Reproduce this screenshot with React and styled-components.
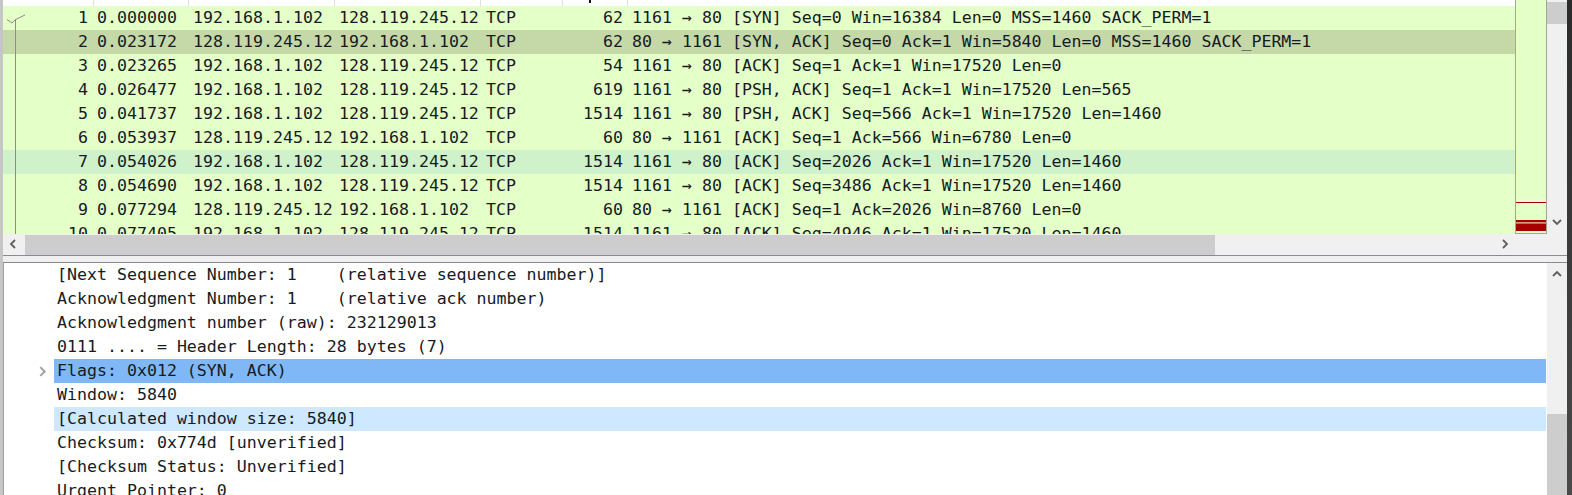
import React from 'react';
import styled, { createGlobalStyle } from 'styled-components';

const GlobalStyle = createGlobalStyle`
  html, body {
    margin: 0;
    padding: 0;
    background: #3a3a3a;
  }
  body {
    font-family: "DejaVu Sans Mono", "Liberation Mono", monospace;
    color: #161b1f;
  }
`;

const COLS = '91px 95px 146px 146px 82px 65px 1fr';

const Screen = styled.div`
  display: flex;
  width: 1572px;
  height: 495px;
  overflow: hidden;
`;

const LeftEdge = styled.div`
  width: 3px;
  flex-shrink: 0;
  background: #c6c6c6;
`;

const RightEdge = styled.div`
  width: 5px;
  flex-shrink: 0;
  background: linear-gradient(#2b2b2b, #4a4a4a);
`;

const Main = styled.div`
  flex: 1;
  min-width: 0;
  display: flex;
  flex-direction: column;
  background: #f0f0f0;
`;

/* ---------- packet list ---------- */

const TopPane = styled.div`
  display: flex;
  height: 234px;
  flex-shrink: 0;
`;

const PacketList = styled.div`
  position: relative;
  width: 1512px;
  flex-shrink: 0;
  overflow: hidden;
  background: #e4ffc7;
`;

const HeaderRow = styled.div`
  display: grid;
  grid-template-columns: ${COLS};
  height: 6px;
  background: #ffffff;
`;

const HeaderCell = styled.div`
  position: relative;
  border-right: 1px solid #dedede;
  &:last-child {
    border-right: none;
  }
`;

const SortMark = styled.span`
  position: absolute;
  top: 0;
  left: 26px;
  width: 2px;
  height: 3px;
  background: #111;
`;

const PacketRow = styled.div`
  display: grid;
  grid-template-columns: ${COLS};
  height: 24px;
  line-height: 24px;
  font-size: 16.6px;
  white-space: pre;
  background: ${({ $tone }) =>
    $tone === 'selected' ? '#c4d8a8' : $tone === 'marked' ? '#cff2cb' : '#e4ffc7'};
`;

const Cell = styled.div`
  overflow: hidden;
  text-align: ${({ $right }) => ($right ? 'right' : 'left')};
  padding: ${({ $pad }) => $pad};
`;

const RelatedLine = styled.svg`
  position: absolute;
  left: 0;
  top: 0;
  pointer-events: none;
`;

const Minimap = styled.div`
  width: 30px;
  flex-shrink: 0;
  border-left: 1px solid #a3a3a3;
  border-right: 1px solid #a3a3a3;
  border-bottom: 1px solid #a3a3a3;
  background: #e4ffc7;
  height: 233px;
`;

const VScroll = styled.div`
  width: 20px;
  flex-shrink: 0;
  display: flex;
  flex-direction: column;
  background: #f0f0f0;
  padding-top: ${({ $pt }) => $pt || 0}px;
  box-sizing: border-box;
`;

const Thumb = styled.div`
  background: #cdcdcd;
  height: ${({ $h }) => $h}px;
  margin-top: ${({ $mt }) => $mt || 0}px;
  flex-shrink: 0;
`;

const ArrowBox = styled.div`
  display: flex;
  align-items: center;
  justify-content: center;
  width: ${({ $w }) => $w || 20}px;
  height: ${({ $h }) => $h || 20}px;
  flex-shrink: 0;
  margin-top: ${({ $auto }) => ($auto ? 'auto' : '0')};
`;

/* ---------- horizontal scrollbar + splitter ---------- */

const HScroll = styled.div`
  display: flex;
  align-items: stretch;
  height: 21px;
  flex-shrink: 0;
  background: #f0f0f0;
`;

const HTrack = styled.div`
  width: 1472px;
  display: flex;
  align-items: stretch;
  padding-top: 1px;
`;

const HThumb = styled.div`
  margin-left: 2px;
  width: 1190px;
  background: #cdcdcd;
`;

const Splitter = styled.div`
  height: 6px;
  flex-shrink: 0;
  background: #efefef;
  border-top: 1px solid #8a8a93;
  border-bottom: 1px solid #8a8a93;
`;

/* ---------- detail tree ---------- */

const DetailPane = styled.div`
  flex: 1;
  display: flex;
  min-height: 0;
  background: #ffffff;
`;

const Tree = styled.div`
  flex: 1;
  border-left: 1px solid #a0a0a0;
  overflow: hidden;
  padding-right: 1px;
`;

const TreeRow = styled.div`
  display: flex;
  height: 24px;
  line-height: 24px;
  font-size: 16.6px;
  white-space: pre;
`;

const Toggle = styled.div`
  width: 50px;
  flex-shrink: 0;
  display: flex;
  align-items: center;
  padding-left: 33px;
  box-sizing: border-box;
`;

const Label = styled.div`
  flex: 1;
  padding-left: 3px;
  background: ${({ $hl }) =>
    $hl === 'focus' ? '#80b7f6' : $hl === 'soft' ? '#cde8ff' : 'transparent'};
`;

const Chevron = ({ dir, color = '#5f5f5f', size = 10 }) => {
  const paths = {
    left: 'M7 1 L3 5 L7 9',
    right: 'M3 1 L7 5 L3 9',
    up: 'M1 7 L5 3 L9 7',
    down: 'M1 3 L5 7 L9 3',
  };
  return (
    <svg width={size} height={size} viewBox="0 0 10 10">
      <path d={paths[dir]} fill="none" stroke={color} strokeWidth="1.8" />
    </svg>
  );
};

const packets = [
  ['1', '0.000000', '192.168.1.102', '128.119.245.12', 'TCP', '62', '1161 → 80 [SYN] Seq=0 Win=16384 Len=0 MSS=1460 SACK_PERM=1'],
  ['2', '0.023172', '128.119.245.12', '192.168.1.102', 'TCP', '62', '80 → 1161 [SYN, ACK] Seq=0 Ack=1 Win=5840 Len=0 MSS=1460 SACK_PERM=1', 'selected'],
  ['3', '0.023265', '192.168.1.102', '128.119.245.12', 'TCP', '54', '1161 → 80 [ACK] Seq=1 Ack=1 Win=17520 Len=0'],
  ['4', '0.026477', '192.168.1.102', '128.119.245.12', 'TCP', '619', '1161 → 80 [PSH, ACK] Seq=1 Ack=1 Win=17520 Len=565'],
  ['5', '0.041737', '192.168.1.102', '128.119.245.12', 'TCP', '1514', '1161 → 80 [PSH, ACK] Seq=566 Ack=1 Win=17520 Len=1460'],
  ['6', '0.053937', '128.119.245.12', '192.168.1.102', 'TCP', '60', '80 → 1161 [ACK] Seq=1 Ack=566 Win=6780 Len=0'],
  ['7', '0.054026', '192.168.1.102', '128.119.245.12', 'TCP', '1514', '1161 → 80 [ACK] Seq=2026 Ack=1 Win=17520 Len=1460', 'marked'],
  ['8', '0.054690', '192.168.1.102', '128.119.245.12', 'TCP', '1514', '1161 → 80 [ACK] Seq=3486 Ack=1 Win=17520 Len=1460'],
  ['9', '0.077294', '128.119.245.12', '192.168.1.102', 'TCP', '60', '80 → 1161 [ACK] Seq=1 Ack=2026 Win=8760 Len=0'],
  ['10', '0.077405', '192.168.1.102', '128.119.245.12', 'TCP', '1514', '1161 → 80 [ACK] Seq=4946 Ack=1 Win=17520 Len=1460'],
];

const details = [
  { text: '[Next Sequence Number: 1    (relative sequence number)]' },
  { text: 'Acknowledgment Number: 1    (relative ack number)' },
  { text: 'Acknowledgment number (raw): 232129013' },
  { text: '0111 .... = Header Length: 28 bytes (7)' },
  { text: 'Flags: 0x012 (SYN, ACK)', hl: 'focus', toggle: true },
  { text: 'Window: 5840' },
  { text: '[Calculated window size: 5840]', hl: 'soft' },
  { text: 'Checksum: 0x774d [unverified]' },
  { text: '[Checksum Status: Unverified]' },
  { text: 'Urgent Pointer: 0' },
];

const cellPads = ['0 6px 0 0', '0 0 0 3px', '0 0 0 4px', '0 0 0 4px', '0 0 0 5px', '0 5px 0 0', '0 0 0 4px'];

export default function App() {
  return (
    <>
      <GlobalStyle />
      <Screen>
        <LeftEdge />
        <Main>
          <TopPane>
            <PacketList>
              <HeaderRow>
                {cellPads.map((_, i) => (
                  <HeaderCell key={i}>{i === 5 && <SortMark />}</HeaderCell>
                ))}
              </HeaderRow>
              {packets.map((p) => (
                <PacketRow key={p[0]} $tone={p[7]}>
                  {p.slice(0, 7).map((v, i) => (
                    <Cell key={i} $right={i === 0 || i === 5} $pad={cellPads[i]}>
                      {v}
                    </Cell>
                  ))}
                </PacketRow>
              ))}
              <RelatedLine width="30" height="234">
                <path d="M4 19.5 L9 23 L12.5 19.5 L22 15" fill="none" stroke="#8c8c8c" strokeWidth="1" />
                <path d="M12.5 19 L12.5 234" fill="none" stroke="#8c8c8c" strokeWidth="1" />
              </RelatedLine>
            </PacketList>
            <Minimap>
              <svg width="30" height="233">
                <rect x="0" y="200" width="30" height="2" fill="#fdf2dc" />
                <rect x="0" y="202" width="30" height="1" fill="#a40000" />
                <rect x="0" y="220" width="30" height="2.5" fill="#a40000" />
                <rect x="0" y="222.5" width="30" height="1" fill="#e8b0a8" />
                <rect x="0" y="223.5" width="30" height="7.5" fill="#a40000" />
              </svg>
            </Minimap>
            <VScroll>
              <Thumb $h={22} $mt={2} />
              <ArrowBox $auto $h={24}>
                <Chevron dir="down" />
              </ArrowBox>
            </VScroll>
          </TopPane>
          <HScroll>
            <ArrowBox>
              <Chevron dir="left" />
            </ArrowBox>
            <HTrack>
              <HThumb />
            </HTrack>
            <ArrowBox>
              <Chevron dir="right" />
            </ArrowBox>
          </HScroll>
          <Splitter />
          <DetailPane>
            <Tree>
              {details.map((d, i) => (
                <TreeRow key={i}>
                  <Toggle>{d.toggle && <Chevron dir="right" color="#a0a0a0" size={11} />}</Toggle>
                  <Label $hl={d.hl}>{d.text}</Label>
                </TreeRow>
              ))}
            </Tree>
            <VScroll>
              <ArrowBox $h={22}>
                <Chevron dir="up" />
              </ArrowBox>
              <Thumb $h={120} $mt={129} />
            </VScroll>
          </DetailPane>
        </Main>
        <RightEdge />
      </Screen>
    </>
  );
}
